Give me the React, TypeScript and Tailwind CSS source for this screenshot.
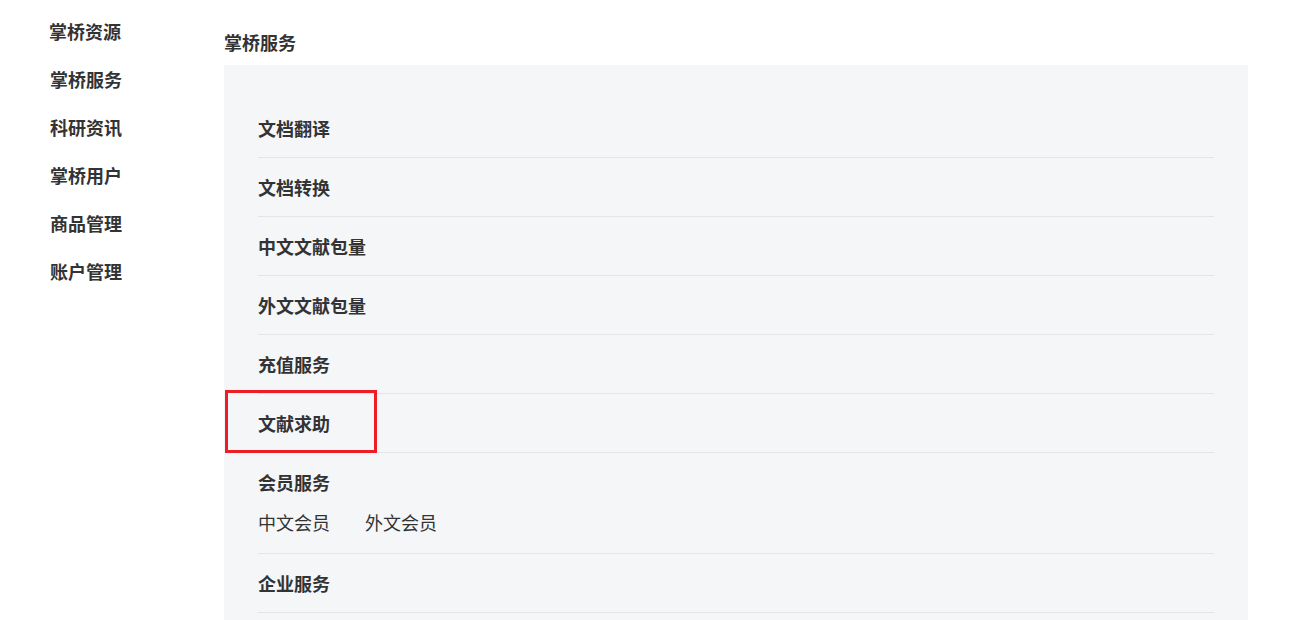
import React from "react";

const navItems = ["掌桥资源", "掌桥服务", "科研资讯", "掌桥用户", "商品管理", "账户管理"];
const rows = ["文档翻译", "文档转换", "中文文献包量", "外文文献包量", "充值服务"];

export default function App() {
  return (
    <div
      className="w-[1296px] h-[620px] overflow-hidden bg-white flex text-[#333333]"
      style={{ fontFamily: '"Noto Sans CJK SC", "Noto Sans", sans-serif' }}
    >
      <div className="w-[224px] shrink-0 pt-[7px] pl-[50px]">
        {navItems.map((t, i) => (
          <div
            key={t}
            className={
              i === 0
                ? "h-[48px] flex items-center text-[18px] font-bold leading-[24px] -ml-[1px]"
                : "h-[48px] flex items-center text-[18px] font-bold leading-[24px]"
            }
          >
            {t}
          </div>
        ))}
      </div>
      <div className="w-[1024px] shrink-0">
        <div className="pt-[30px] h-[65px] text-[18px] font-bold leading-[24px]">掌桥服务</div>
        <div className="bg-[#f5f6f8] h-[600px] px-[34px] pt-[34px]">
          {rows.map((t) => (
            <div
              key={t}
              className="h-[59px] border-b border-[#e3e5e8] flex items-center text-[18px] font-bold leading-[24px]"
            >
              {t}
            </div>
          ))}
          <div className="relative h-[59px] border-b border-[#e3e5e8] flex items-center text-[18px] font-bold leading-[24px]">
            文献求助
            <div className="absolute left-[-33px] top-[-4px] w-[152px] h-[63px] border-[3px] border-[#ee1c25]" />
          </div>
          <div className="h-[101px] border-b border-[#e3e5e8] pt-[17px]">
            <div className="text-[18px] font-bold leading-[24px]">会员服务</div>
            <div className="mt-[16px] flex gap-[35px] text-[18px] leading-[24px]">
              <span>中文会员</span>
              <span>外文会员</span>
            </div>
          </div>
          <div className="h-[59px] border-b border-[#e3e5e8] flex items-center text-[18px] font-bold leading-[24px]">
            企业服务
          </div>
        </div>
      </div>
    </div>
  );
}
